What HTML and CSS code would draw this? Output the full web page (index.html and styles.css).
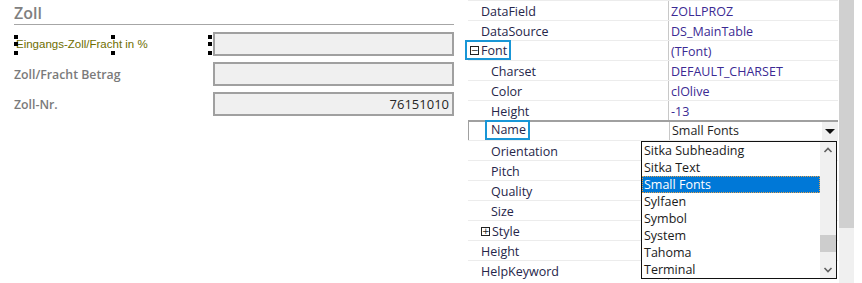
FILE: index.html
```html
<!DOCTYPE html>
<html lang="de">
  <head>
    <meta charset="UTF-8" />
    <title>Zoll - Objektinspektor</title>
    <link rel="stylesheet" href="styles.css">
  </head>
  <body>
    <div class="page">
      <!-- formular links -->
      <section class="form">
        <h2 class="group-title">Zoll</h2>
        <div class="form-row">
          <div class="lbl-wrap selected">
            <span class="lbl lbl-small">Eingangs-Zoll/Fracht in %</span>
            <i class="h h-tl"></i><i class="h h-ml"></i><i class="h h-bl"></i>
            <i class="h h-tm"></i><i class="h h-bm"></i>
            <i class="h h-tr"></i><i class="h h-mr"></i><i class="h h-br"></i>
          </div>
          <div class="field"></div>
        </div>
        <div class="form-row">
          <div class="lbl-wrap"><span class="lbl">Zoll/Fracht Betrag</span></div>
          <div class="field"></div>
        </div>
        <div class="form-row">
          <div class="lbl-wrap"><span class="lbl">Zoll-Nr.</span></div>
          <div class="field">76151010</div>
        </div>
      </section>

      <!-- objektinspektor rechts -->
      <section class="inspector">
        <div class="grid">
          <div class="row"><div class="name">DataField</div><div class="value">ZOLLPROZ</div></div>
          <div class="row"><div class="name">DataSource</div><div class="value">DS_MainTable</div></div>
          <div class="row">
            <div class="name"><span class="focus-box focus-font"><span class="tree-box">&minus;</span>Font</span></div>
            <div class="value">(TFont)</div>
          </div>
          <div class="row"><div class="name sub">Charset</div><div class="value">DEFAULT_CHARSET</div></div>
          <div class="row"><div class="name sub">Color</div><div class="value">clOlive</div></div>
          <div class="row"><div class="name sub">Height</div><div class="value">-13</div></div>
          <div class="row active">
            <div class="name"><span class="focus-box focus-name">Name</span></div>
            <div class="value">Small Fonts<span class="drop-btn"></span></div>
          </div>
          <div class="row"><div class="name sub">Orientation</div><div class="value"></div></div>
          <div class="row"><div class="name sub">Pitch</div><div class="value"></div></div>
          <div class="row"><div class="name sub">Quality</div><div class="value"></div></div>
          <div class="row"><div class="name sub">Size</div><div class="value"></div></div>
          <div class="row"><div class="name plus"><span class="tree-box">+</span>Style</div><div class="value"></div></div>
          <div class="row"><div class="name">Height</div><div class="value"></div></div>
          <div class="row"><div class="name">HelpKeyword</div><div class="value"></div></div>
        </div>
        <div class="vscroll"><div class="vthumb"></div></div>

        <!-- aufgeklappte liste -->
        <div class="droplist">
          <ul class="items">
            <li>Sitka Subheading</li>
            <li>Sitka Text</li>
            <li class="sel">Small Fonts</li>
            <li>Sylfaen</li>
            <li>Symbol</li>
            <li>System</li>
            <li>Tahoma</li>
            <li>Terminal</li>
          </ul>
          <div class="list-scroll">
            <svg class="arrow" width="16" height="16" viewBox="0 0 16 16"><path d="M4.5 10 L8 6.5 L11.5 10" fill="none" stroke="#606060" stroke-width="1.6"/></svg>
            <div class="list-track"><div class="list-thumb"></div></div>
            <svg class="arrow" width="16" height="16" viewBox="0 0 16 16"><path d="M4.5 6 L8 9.5 L11.5 6" fill="none" stroke="#606060" stroke-width="1.6"/></svg>
          </div>
        </div>
      </section>
    </div>
  </body>
</html>
```

FILE: styles.css
```css
html, body {
  margin: 0;
  background: #fff;
}

.page {
  width: 862px;
  height: 283px;
  overflow: hidden;
  display: flex;
  font-family: "Open Sans", "Noto Sans", sans-serif;
  font-size: 12.5px;
}

/* formular */
.form {
  width: 440px;
  padding: 0 0 0 14px;
}

.group-title {
  margin: 0;
  padding-top: 3px;
  height: 21px;
  font-size: 16px;
  font-weight: 600;
  line-height: 20px;
  color: #808080;
  border-bottom: 1px solid #a6a6a6;
}

.form-row {
  display: flex;
  align-items: center;
  height: 24px;
  margin-top: 6px;
}

.form-row:first-of-type {
  margin-top: 7px;
}

.lbl-wrap {
  position: relative;
  width: 200px;
  height: 18px;
  display: flex;
  align-items: center;
}

.lbl {
  font-size: 12.3px;
  font-weight: 600;
  color: #7a7a7a;
}

.lbl-small {
  font-family: "Liberation Sans", Arial, sans-serif;
  font-size: 11.5px;
  font-weight: normal;
  color: #6e6e00;
  padding-left: 2px;
}

/* griffe der auswahl */
.h {
  position: absolute;
  width: 4px;
  height: 4px;
  background: #000;
}
.h-tl { left: 0; top: 0; }
.h-ml { left: 0; top: 7px; }
.h-bl { left: 0; top: 16px; }
.h-tm { left: 97px; top: 0; }
.h-bm { left: 97px; top: 16px; }
.h-tr { left: 194px; top: 0; }
.h-mr { left: 194px; top: 7px; }
.h-br { left: 194px; top: 16px; }

.field {
  width: 236px;
  height: 20px;
  border: 2px solid #a0a0a0;
  background: #f0f0f0;
  text-align: right;
  padding-right: 3px;
  font-size: 13px;
  line-height: 20px;
  color: #262626;
  box-sizing: content-box;
}

/* objektinspektor */
.inspector {
  position: relative;
  flex: 1;
  display: flex;
  padding-left: 14px;
}

.grid {
  width: 370px;
}

.row {
  display: flex;
  height: 20px;
  box-sizing: border-box;
  border-top: 1px solid #ececec;
  line-height: 19px;
}

.name {
  width: 200px;
  padding-left: 13px;
  padding-top: 1px;
  box-sizing: border-box;
  color: #26264a;
  white-space: nowrap;
  display: flex;
  align-items: center;
}

.name.sub {
  padding-left: 23px;
}

.value {
  flex: 1;
  position: relative;
  border-left: 1px solid #c8c8c8;
  padding: 1px 0 0 2px;
  color: #3b2a93;
}

.tree-box {
  display: inline-block;
  width: 7px;
  height: 7px;
  border: 1px solid #222;
  font-size: 9px;
  line-height: 6px;
  text-align: center;
  color: #222;
  margin-right: 2px;
  font-family: "DejaVu Sans", sans-serif;
}

.focus-box {
  display: inline-flex;
  align-items: center;
  height: 20px;
  box-sizing: border-box;
  border: 2px solid #1996d6;
  margin-top: -2px;
}

.focus-font {
  margin-left: -16px;
  padding: 0 2px 0 3px;
}

.focus-name {
  margin-left: -6px;
  padding: 0 2px 0 4px;
}

.row.active {
  border-top: 2px solid #a0a0a0;
  border-left: 1px solid #a0a0a0;
  line-height: 18px;
}

.row.active .name {
  padding-left: 22px;
  padding-top: 0;
}

.row.active .value {
  padding-top: 0;
  color: #1e1e1e;
}

.drop-btn {
  position: absolute;
  right: 0;
  top: 0;
  width: 16px;
  height: 18px;
  background: #f0f0f0;
}

.drop-btn::after {
  content: "";
  position: absolute;
  left: 3px;
  top: 7px;
  border-left: 5px solid transparent;
  border-right: 5px solid transparent;
  border-top: 5px solid #111;
}

.vscroll {
  width: 15px;
  height: 283px;
  margin-left: 1px;
  background: #f0f0f0;
}

.vthumb {
  height: 228px;
  background: #d0d0d0;
}

/* liste */
.droplist {
  position: absolute;
  left: 187px;
  top: 141px;
  width: 194px;
  height: 136px;
  border: 1px solid #111;
  background: #fff;
  display: flex;
}

.items {
  list-style: none;
  margin: 0;
  padding: 0;
  flex: 1;
  overflow: hidden;
}

.items li {
  height: 17px;
  line-height: 17px;
  padding-left: 2px;
  font-size: 12.5px;
  color: #1a1a1a;
  white-space: nowrap;
}

.items li.sel {
  background: #0078d7;
  color: #fff;
  outline: 1px dotted #e8a24a;
  outline-offset: -1px;
}

.list-scroll {
  width: 16px;
  background: #f0f0f0;
  display: flex;
  flex-direction: column;
}

.list-track {
  flex: 1;
  position: relative;
}

.list-thumb {
  position: absolute;
  left: 0;
  right: 0;
  top: 77px;
  height: 17px;
  background: #cdcdcd;
}
```
